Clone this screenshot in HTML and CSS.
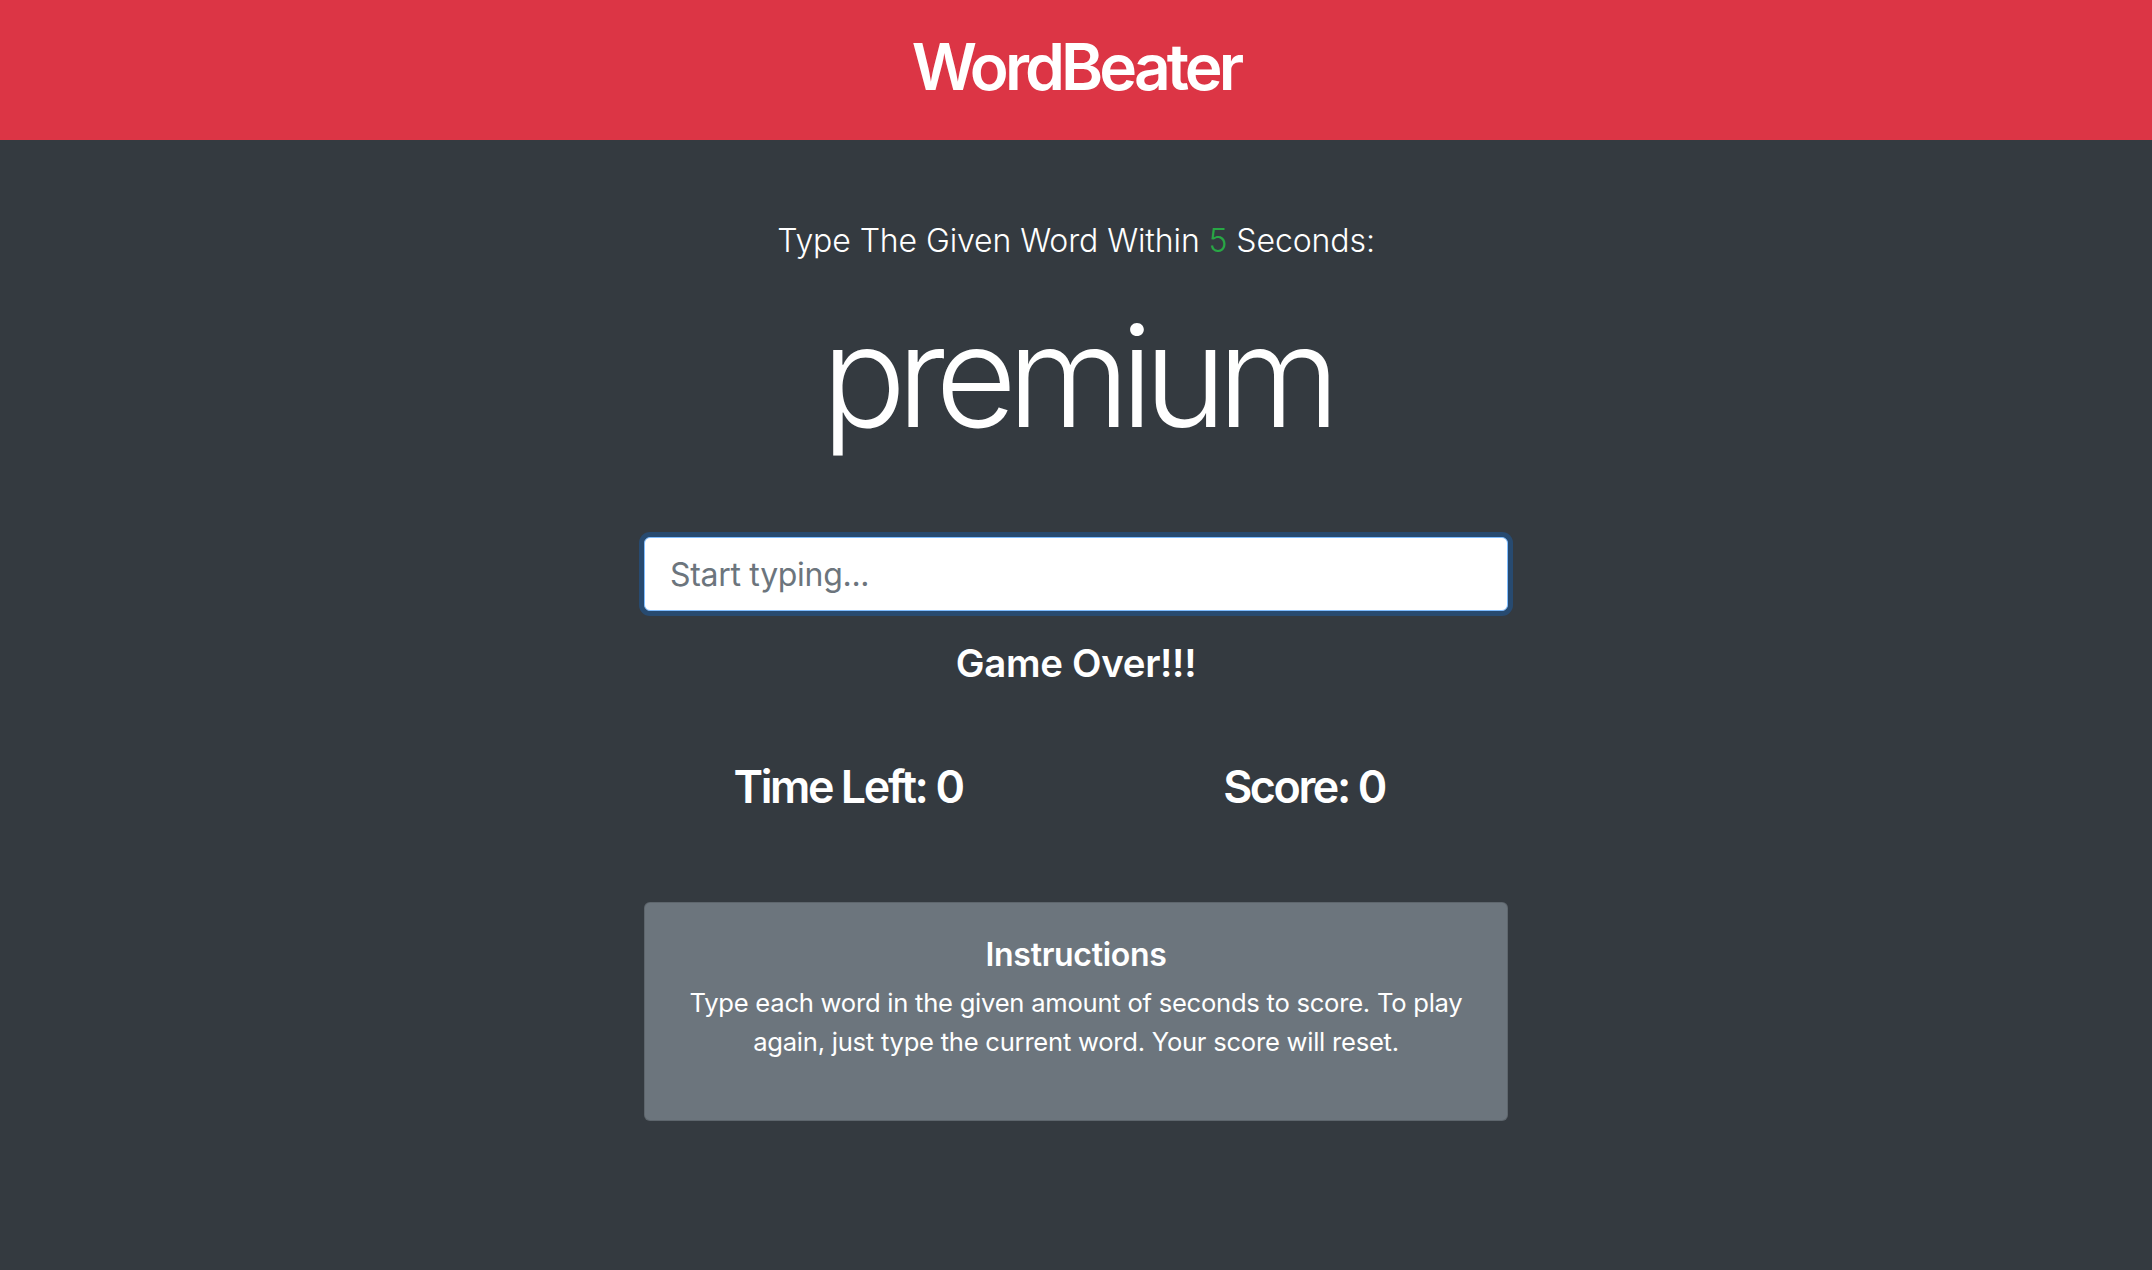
FILE: index.html
```html
<!DOCTYPE html>
<html lang="en">
<head>
<meta charset="utf-8">
<title>WordBeater</title>
<link rel="stylesheet" href="styles.css">
</head>
<body>
<header class="topbar">
  <h1 class="brand">WordBeater</h1>
</header>
<main class="main">
  <div class="col">
    <p class="lead">Type The Given Word Within <span class="secs">5</span> Seconds:</p>
    <h2 class="word">premium</h2>
    <input class="entry" type="text" placeholder="Start typing..." autofocus>
    <h4 class="message">Game Over!!!</h4>
    <div class="stats">
      <h3 class="stat">Time Left: <span>0</span></h3>
      <h3 class="stat">Score: <span>0</span></h3>
    </div>
    <div class="card">
      <h5 class="card-title">Instructions</h5>
      <p class="card-text">Type each word in the given amount of seconds to score. To play again, just type the current word. Your score will reset.</p>
    </div>
  </div>
</main>
</body>
</html>
```
FILE: styles.css
```css
* { box-sizing: border-box; }
html, body { margin: 0; padding: 0; }
body {
  background: #343a40;
  color: #fff;
  font-family: Inter, "Liberation Sans", sans-serif;
  min-height: 1270px;
}
.topbar {
  background: #dc3545;
  height: 140px;
  padding-top: 29px;
  text-align: center;
}
.brand {
  margin: 0;
  font-size: 64px;
  line-height: 76.8px;
  font-weight: 600;
  letter-spacing: -3.9px;
}
.main {
  display: flex;
  justify-content: center;
  padding-top: 77px;
}
.col {
  width: 864px;
  display: flex;
  flex-direction: column;
  align-items: stretch;
  text-align: center;
}
.lead {
  margin: 0 0 27px;
  font-size: 32px;
  line-height: 48px;
  font-weight: 300;
  letter-spacing: -0.1px;
}
.secs { color: #28a745; }
.word {
  margin: 0 0 76px;
  font-size: 140.8px;
  line-height: 169px;
  font-weight: 300;
  letter-spacing: -9.6px;
}
.entry {
  display: block;
  width: 864px;
  height: 74px;
  margin: 0;
  padding: 0 25px;
  font-family: inherit;
  font-size: 32px;
  color: #495057;
  background: #fff;
  border: 1px solid #80bdff;
  border-radius: 6px;
  outline: none;
  box-shadow: 0 0 0 5px rgba(0, 123, 255, 0.25);
  letter-spacing: -0.3px;
}
.entry::placeholder { color: #6c757d; }
.message {
  margin: 29px 0 0;
  font-size: 38.4px;
  line-height: 46px;
  font-weight: 600;
  letter-spacing: -0.3px;
}
.stats {
  display: grid;
  grid-template-columns: 1fr 1fr;
  margin: 75px -24px 0;
}
.stat {
  margin: 0;
  font-size: 44.8px;
  line-height: 53.76px;
  font-weight: 600;
  letter-spacing: -2.4px;
}
.card {
  margin-top: 87px;
  background: #6c757d;
  border: 1px solid rgba(0, 0, 0, 0.125);
  border-radius: 6px;
  padding: 33px 32px 0;
  height: 219px;
}
.card-title {
  margin: 0 0 10px;
  font-size: 32px;
  line-height: 38.4px;
  font-weight: 600;
  letter-spacing: -0.3px;
}
.card-text {
  margin: 0;
  font-size: 25.6px;
  line-height: 38.4px;
  font-weight: 400;
  letter-spacing: -0.25px;
}
```
